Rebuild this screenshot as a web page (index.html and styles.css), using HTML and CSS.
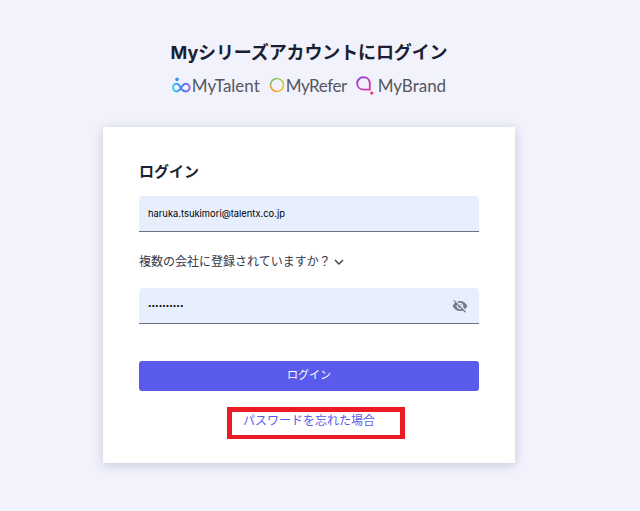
FILE: index.html
```html
<!DOCTYPE html>
<html lang="ja">
<head>
    <meta charset="UTF-8">
    <meta name="viewport" content="width=device-width, initial-scale=1.0">
    <title>ログイン</title>
    <link rel="stylesheet" href="styles.css">
</head>
<body>

    <div class="page">
        <h1 class="title">Myシリーズアカウントにログイン</h1>

        <div class="brands">
            <div class="brand brand-talent">
                <svg width="19" height="17" viewBox="0 0 19 17" fill="none">
                    <defs>
                        <linearGradient id="talentGrad" x1="0" y1="0" x2="1" y2="0">
                            <stop offset="0" stop-color="#2fd2e8"/>
                            <stop offset="0.5" stop-color="#3a86ee"/>
                            <stop offset="1" stop-color="#9a5cf0"/>
                        </linearGradient>
                    </defs>
                    <circle cx="5" cy="2.4" r="1.8" fill="#3f8fe8"/>
                    <path d="M9 11.6C7.6 8.4 6.2 6.8 4.6 6.8C2.6 6.8 1 8.6 1 10.6C1 12.6 2.6 14.4 4.6 14.4C6.6 14.4 8 12.4 9.4 10.2C10.8 8 12 6.8 13.8 6.8C15.8 6.8 17.6 8.6 17.6 10.6C17.6 12.6 15.8 14.4 13.8 14.4C11.8 14.4 10.4 13.4 9 11.6Z" stroke="url(#talentGrad)" stroke-width="2"/>
                </svg>
                <span class="brand-name">MyTalent</span>
            </div>
            <div class="brand brand-refer">
                <svg width="16" height="16" viewBox="0 0 16 16" fill="none" stroke-width="1.6">
                    <path d="M8 1.5A6.5 6.5 0 0 0 1.5 8" stroke="#7fc06a"/>
                    <path d="M8 1.5A6.5 6.5 0 0 1 14.5 8" stroke="#b9cc4a"/>
                    <path d="M14.5 8A6.5 6.5 0 0 1 8 14.5" stroke="#f2c032"/>
                    <path d="M8 14.5A6.5 6.5 0 0 1 1.5 8" stroke="#f09a3c"/>
                </svg>
                <span class="brand-name">MyRefer</span>
            </div>
            <div class="brand brand-mybrand">
                <svg width="19" height="19" viewBox="0 0 19 19" fill="none">
                    <defs>
                        <linearGradient id="brandGrad" x1="0" y1="0" x2="1" y2="1">
                            <stop offset="0" stop-color="#8f3fd8"/>
                            <stop offset="1" stop-color="#e0409a"/>
                        </linearGradient>
                    </defs>
                    <path d="M13.8 13.6H8C3.9 13.6 1.2 11 1.2 7.4C1.2 3.8 3.9 1.2 7.5 1.2C11.1 1.2 13.8 3.8 13.8 7.4V13.6Z" stroke="url(#brandGrad)" stroke-width="1.9"/>
                    <circle cx="15.8" cy="17" r="1.6" fill="#ee2f6b"/>
                </svg>
                <span class="brand-name">MyBrand</span>
            </div>
        </div>

        <div class="card">
            <h2 class="card-title">ログイン</h2>

            <div class="field">
                <input class="field-input" type="text" value="haruka.tsukimori@talentx.co.jp">
            </div>

            <div class="company-toggle">
                <span>複数の会社に登録されていますか？</span>
                <svg width="10" height="6" viewBox="0 0 10 6" fill="none">
                    <path d="M1 1L5 5L9 1" stroke="#3c3f4d" stroke-width="1.4"/>
                </svg>
            </div>

            <div class="field field-password">
                <input class="field-input password-input" type="password" value="1234567890">
                <svg class="eye-icon" width="16" height="16" viewBox="0 0 24 24">
                    <path fill="#777986" d="M12 7c2.76 0 5 2.24 5 5 0 .65-.13 1.26-.36 1.83l2.92 2.92c1.51-1.26 2.7-2.89 3.43-4.75-1.73-4.39-6-7.5-11-7.5-1.4 0-2.74.25-3.98.7l2.16 2.16C10.74 7.13 11.35 7 12 7zM2 4.27l2.28 2.28.46.46C3.08 8.3 1.78 10.02 1 12c1.73 4.39 6 7.5 11 7.5 1.55 0 3.03-.3 4.38-.84l.42.42L19.73 22 21 20.73 3.27 3 2 4.27zM7.53 9.8l1.55 1.55c-.05.21-.08.43-.08.65 0 1.66 1.34 3 3 3 .22 0 .44-.03.65-.08l1.55 1.55c-.67.33-1.41.53-2.2.53-2.76 0-5-2.24-5-5 0-.79.2-1.53.53-2.2zm4.31-.78l3.15 3.15.02-.16c0-1.66-1.34-3-3-3l-.17.01z"/>
                </svg>
            </div>

            <button class="login-button">ログイン</button>

            <div class="forgot">
                <a class="forgot-link" href="#">パスワードを忘れた場合</a>
                <div class="highlight"></div>
            </div>
        </div>
    </div>

</body>
</html>
```

FILE: styles.css
```css
body {
    margin: 0;
    background: #f1f2fc;
    font-family: Inter, "Noto Sans CJK JP", sans-serif;
    color: #1b1f33;
}
.page {
    width: 618px;
    height: 511px;
    padding-top: 41px;
    box-sizing: border-box;
    display: flex;
    flex-direction: column;
    align-items: center;
    overflow: hidden;
}
.title {
    margin: 0;
    font-size: 18px;
    line-height: 24px;
    font-weight: 700;
    letter-spacing: -0.13px;
}
.brands {
    display: flex;
    align-items: center;
    margin-top: 8px;
    height: 24px;
}
.brand {
    display: flex;
    align-items: center;
}
.brand-name {
    font-family: Lato, sans-serif;
    font-size: 17px;
    color: #55575f;
}
.brand-talent .brand-name {
    margin-left: 1px;
}
.brand-refer {
    margin-left: 9px;
}
.brand-refer .brand-name {
    margin-left: 1px;
    letter-spacing: -0.45px;
}
.brand-mybrand {
    margin-left: 9px;
}
.brand-mybrand .brand-name {
    margin-left: 3px;
}
.card {
    width: 412px;
    height: 336px;
    margin-top: 30px;
    padding: 34px 36px 0;
    box-sizing: border-box;
    background: #fff;
    box-shadow: 0 2px 10px rgba(30, 35, 70, 0.2);
}
.card-title {
    margin: 0;
    font-size: 15px;
    line-height: 22px;
    font-weight: 700;
}
.field {
    position: relative;
    margin-top: 13px;
}
.field-input {
    display: block;
    width: 100%;
    height: 36px;
    box-sizing: border-box;
    padding: 0 9px;
    border: none;
    border-bottom: 1px solid #6e7084;
    border-radius: 4px 4px 0 0;
    background: #e8effc;
    font-family: Inter, sans-serif;
    font-size: 9.4px;
    color: #000;
}
.password-input {
    font-size: 6.3px;
}
.company-toggle {
    display: flex;
    align-items: center;
    gap: 3px;
    margin-top: 21px;
    font-size: 12px;
    line-height: 18px;
    color: #33364a;
}
.field-password {
    margin-top: 17px;
}
.eye-icon {
    position: absolute;
    right: 11px;
    top: 10px;
}
.login-button {
    display: block;
    width: 100%;
    height: 30px;
    margin-top: 37px;
    padding: 0 0 5px;
    border: none;
    border-radius: 3px;
    background: #5a5bec;
    color: #fff;
    font-family: Inter, "Noto Sans CJK JP", sans-serif;
    font-size: 11px;
}
.forgot {
    position: relative;
    margin-top: 21px;
    text-align: center;
    font-size: 12px;
    line-height: 18px;
}
.forgot-link {
    color: #5a5bec;
    text-decoration: none;
}
.highlight {
    position: absolute;
    left: 88px;
    top: -5px;
    width: 178px;
    height: 32px;
    box-sizing: border-box;
    border: 5px solid #ed1c24;
    border-bottom-width: 4px;
}
```
